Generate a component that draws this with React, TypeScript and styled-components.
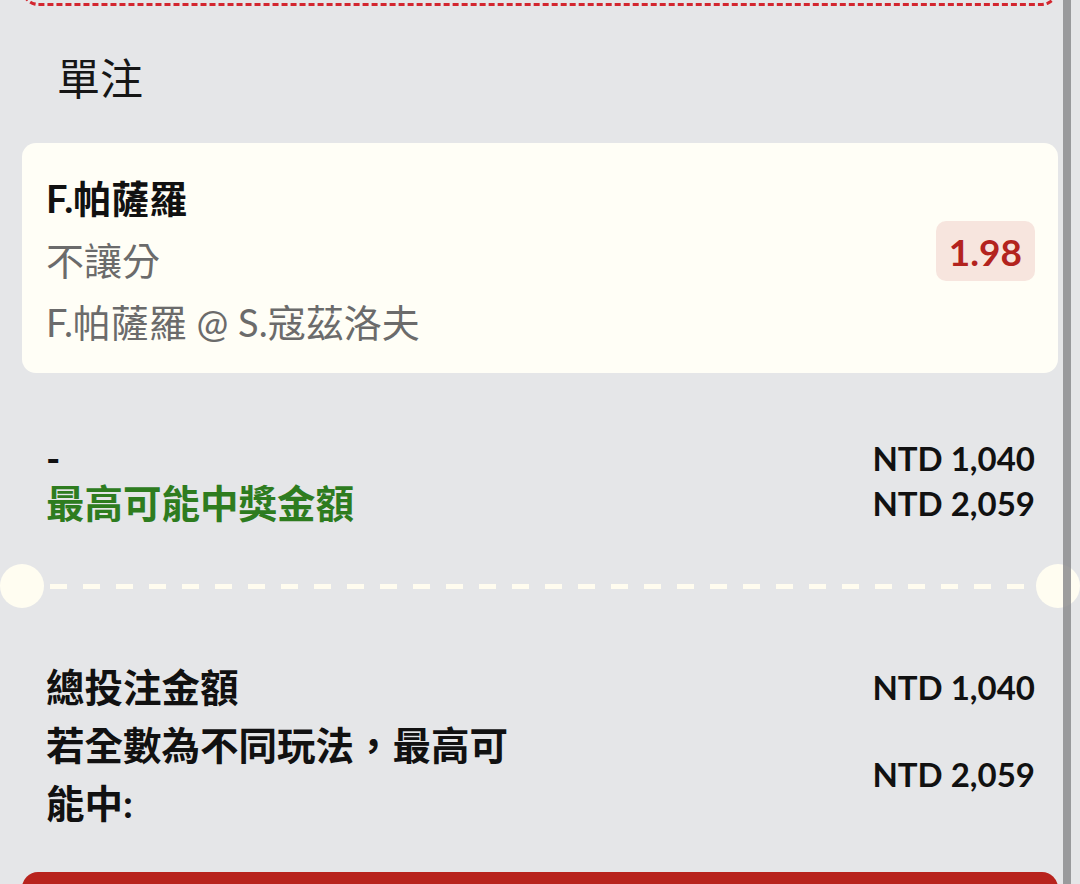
import React from "react";
import styled, { createGlobalStyle } from "styled-components";

const GlobalStyle = createGlobalStyle`
  html, body {
    margin: 0;
    padding: 0;
    background: #e5e6e8;
    overflow: hidden;
  }
  body {
    font-family: Lato, "Noto Sans CJK TC", "Noto Sans", sans-serif;
    color: #111;
  }
`;

const Page = styled.div`
  position: relative;
  width: 1080px;
  height: 884px;
  overflow: hidden;
  display: flex;
  flex-direction: column;
`;

const PrevCardEdge = styled.div`
  height: 20px;
  margin: -17px 22px 0;
  border: 3px dashed #d3262f;
  border-top: none;
  border-radius: 0 0 16px 16px;
  flex-shrink: 0;
`;

const Title = styled.h2`
  margin: 45px 0 0 57px;
  font-size: 43px;
  line-height: 56px;
  font-weight: 400;
  color: #161616;
`;

const BetCard = styled.div`
  margin: 36px 22px 0;
  height: 230px;
  box-sizing: border-box;
  padding: 23px 23px 20px 24px;
  background: #fffef6;
  border-radius: 14px;
  display: flex;
  align-items: center;
  justify-content: space-between;
  flex-shrink: 0;
`;

const BetInfo = styled.div`
  display: flex;
  flex-direction: column;
`;

const BetLine = styled.div<{ $strong?: boolean }>`
  font-size: 38px;
  line-height: 62px;
  font-weight: ${(p) => (p.$strong ? 700 : 400)};
  color: ${(p) => (p.$strong ? "#111" : "#6b6b6b")};
  white-space: nowrap;
`;

const OddsBadge = styled.div`
  align-self: center;
  margin-top: -17px;
  height: 60px;
  padding: 0 13px;
  box-sizing: border-box;
  display: flex;
  align-items: center;
  background: #f7e5de;
  border-radius: 10px;
  color: #b3231e;
  font-size: 37px;
  font-weight: 700;
`;

const SummaryGrid = styled.div<{ $top: number }>`
  margin: ${(p) => p.$top}px 45px 0 46px;
  display: grid;
  grid-template-columns: 480px 1fr;
  align-items: center;
  flex-shrink: 0;
`;

const Label = styled.div<{ $tone?: "green" | "dark"; $lh: number }>`
  font-size: 38.5px;
  line-height: ${(p) => p.$lh}px;
  font-weight: 700;
  color: ${(p) => (p.$tone === "green" ? "#2e7c1f" : "#111")};
`;

const Amount = styled.div<{ $lh: number }>`
  justify-self: end;
  font-size: 33px;
  line-height: ${(p) => p.$lh}px;
  font-weight: 700;
  color: #111;
  white-space: nowrap;
`;

const Divider = styled.div`
  position: relative;
  margin: 38px 22px 0;
  height: 44px;
  display: flex;
  align-items: center;
  flex-shrink: 0;
`;

const DashLine = styled.div`
  flex: 1;
  height: 5px;
  margin: 0 28px;
  background: repeating-linear-gradient(
    to right,
    #fffcef 0 17px,
    transparent 17px 33px
  );
`;

const Notch = styled.div<{ $side: "left" | "right" }>`
  position: absolute;
  top: 0;
  ${(p) => p.$side}: -22px;
  width: 44px;
  height: 44px;
  border-radius: 50%;
  background: #fffdf1;
`;

const SubmitButton = styled.button`
  margin: auto 22px -48px;
  height: 60px;
  border: none;
  border-radius: 16px;
  background: #b8231d;
  flex-shrink: 0;
`;

const ScrollBar = styled.div`
  position: absolute;
  top: 0;
  bottom: 0;
  left: 1063px;
  width: 8px;
  background: rgba(140, 140, 142, 0.85);
`;

export default function App() {
  return (
    <>
      <GlobalStyle />
      <Page>
        <PrevCardEdge />
        <Title>單注</Title>
        <BetCard>
          <BetInfo>
            <BetLine $strong>F.帕薩羅</BetLine>
            <BetLine>不讓分</BetLine>
            <BetLine>F.帕薩羅 @ S.寇茲洛夫</BetLine>
          </BetInfo>
          <OddsBadge>1.98</OddsBadge>
        </BetCard>
        <SummaryGrid $top={63}>
          <Label $lh={45}>-</Label>
          <Amount $lh={45}>NTD 1,040</Amount>
          <Label $lh={45} $tone="green">最高可能中獎金額</Label>
          <Amount $lh={45}>NTD 2,059</Amount>
        </SummaryGrid>
        <Divider>
          <Notch $side="left" />
          <DashLine />
          <Notch $side="right" />
        </Divider>
        <SummaryGrid $top={50}>
          <Label $lh={58}>總投注金額</Label>
          <Amount $lh={58}>NTD 1,040</Amount>
          <Label $lh={58}>若全數為不同玩法，最高可能中:</Label>
          <Amount $lh={58}>NTD 2,059</Amount>
        </SummaryGrid>
        <SubmitButton aria-label="submit" />
        <ScrollBar />
      </Page>
    </>
  );
}
